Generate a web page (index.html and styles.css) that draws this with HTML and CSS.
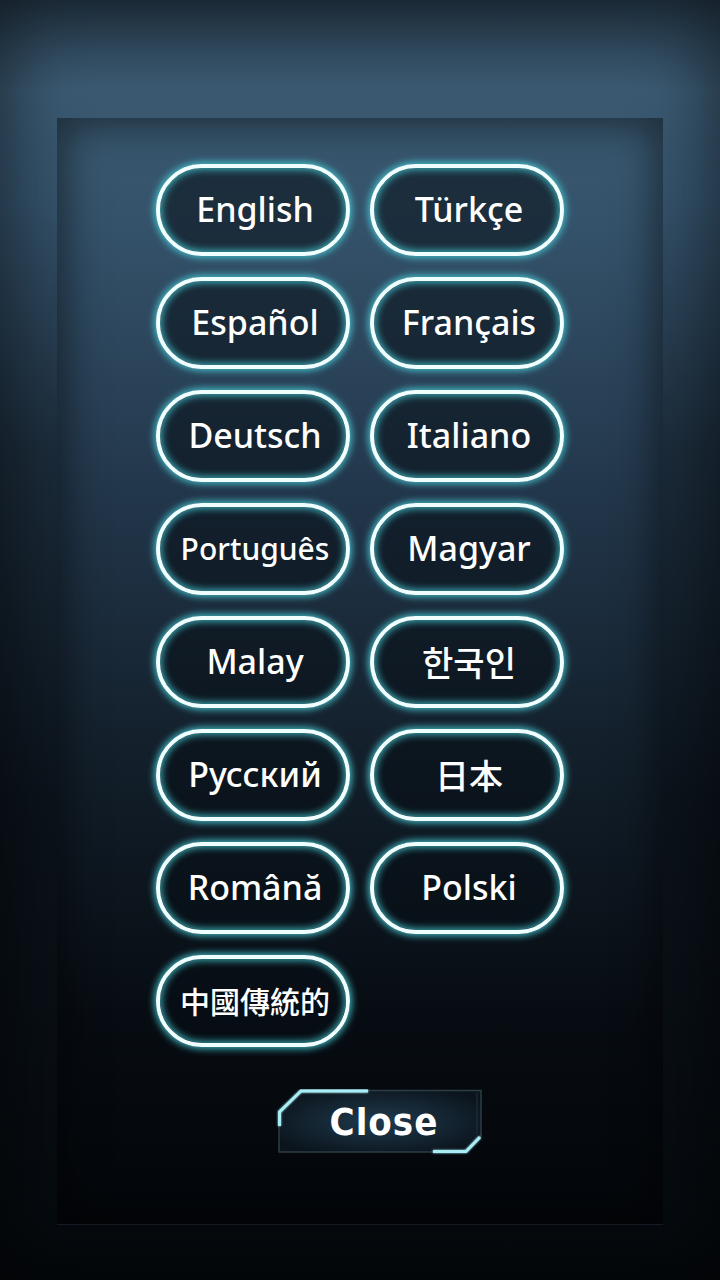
FILE: index.html
```html
<!DOCTYPE html>
<html>
<head>
    <title>Language</title>
    <link rel="stylesheet" href="styles.css">
</head>
<body>
    <div class="screen">
        <div class="panel">
            <!-- language list -->
            <div class="lang-grid">
                <button class="lang-btn">English</button>
                <button class="lang-btn">Türkçe</button>
                <button class="lang-btn">Español</button>
                <button class="lang-btn">Français</button>
                <button class="lang-btn">Deutsch</button>
                <button class="lang-btn">Italiano</button>
                <button class="lang-btn small">Português</button>
                <button class="lang-btn">Magyar</button>
                <button class="lang-btn">Malay</button>
                <button class="lang-btn cjk">한국인</button>
                <button class="lang-btn">Русский</button>
                <button class="lang-btn cjk">日本</button>
                <button class="lang-btn">Română</button>
                <button class="lang-btn">Polski</button>
                <button class="lang-btn cjk-tc">中國傳統的</button>
            </div>

            <div class="close-row">
                <button class="close-btn">
                    <svg class="close-frame" width="208" height="66" viewBox="0 0 208 66">
                        <defs>
                            <radialGradient id="closeFill" cx="50%" cy="50%" r="60%">
                                <stop offset="0" stop-color="#1f3a4e"/>
                                <stop offset="1" stop-color="#0b141c"/>
                            </radialGradient>
                            <filter id="glow" x="-20%" y="-50%" width="140%" height="200%">
                                <feGaussianBlur stdDeviation="1.2" result="b"/>
                                <feMerge><feMergeNode in="b"/><feMergeNode in="SourceGraphic"/></feMerge>
                            </filter>
                        </defs>
                        <path d="M3 23 L25 1.5 L205 1.5 L205 47 L190 63 L3 63 Z" fill="url(#closeFill)" stroke="#2c3d46" stroke-width="1.5"/>
                        <path d="M201 4 L201 45" stroke="#243139" stroke-width="1"/>
                        <path d="M3.5 37 L3.5 23 L25 2 L92 2" fill="none" stroke="#a8ecf6" stroke-width="3" filter="url(#glow)"/>
                        <path d="M157 62.5 L190 62.5 L204 48" fill="none" stroke="#a8ecf6" stroke-width="3" filter="url(#glow)"/>
                    </svg>
                    <span class="close-label">Close</span>
                </button>
            </div>
        </div>
    </div>
</body>
</html>
```

FILE: styles.css
```css
body {
    margin: 0;
    padding: 0;
    background-color: #05090d;
    font-family: "Noto Sans", "Noto Sans CJK KR", sans-serif;
}

.screen {
    width: 720px;
    height: 1280px;
    box-sizing: border-box;
    padding: 118px 57px 55px 57px;
    background: linear-gradient(#263b4c 0, #3b5a72 90px, #35536c 200px, #1c2c3b 450px, #0b131b 800px, #05090d 1280px);
    box-shadow: inset 0 0 70px 10px rgba(0, 0, 0, 0.5);
}

.panel {
    height: 1107px;
    box-sizing: border-box;
    padding-top: 46px;
    display: flex;
    flex-direction: column;
    align-items: center;
    background: linear-gradient(#3a5a72 0, #34526a 110px, #22364a 380px, #121e29 650px, #070c12 900px, #03060a 100%);
    box-shadow: inset 0 0 40px 8px rgba(0, 0, 0, 0.5);
    border-bottom: 1px solid #121b23;
}

.lang-grid {
    display: grid;
    grid-template-columns: 194px 194px;
    column-gap: 20px;
    row-gap: 21px;
}

.lang-btn {
    height: 92px;
    box-sizing: border-box;
    border: 4px solid #effeff;
    border-radius: 46px;
    background-color: rgba(8, 14, 22, 0.55);
    box-shadow: 0 0 7px 2px rgba(70, 205, 215, 0.85), inset 0 0 7px 2px rgba(70, 205, 215, 0.75);
    color: #fff;
    font-family: "Noto Sans", "Noto Sans CJK KR", sans-serif;
    font-size: 34px;
    font-weight: 500;
    padding: 0 0 2px 4px;
    cursor: pointer;
}

.lang-btn.small {
    font-size: 30px;
}

.lang-btn.cjk {
    font-family: "Noto Sans CJK KR", "Noto Sans CJK JP", sans-serif;
    font-size: 34px;
    font-weight: 500;
}

.lang-btn.cjk-tc {
    font-family: "Noto Sans CJK TC", sans-serif;
    font-size: 30px;
    font-weight: 500;
}

.close-row {
    margin-top: 42px;
    padding-left: 40px;
}

.close-btn {
    position: relative;
    width: 208px;
    height: 66px;
    border: none;
    padding: 0;
    background: none;
    cursor: pointer;
}

.close-frame {
    position: absolute;
    left: 0;
    top: 0;
}

.close-label {
    position: relative;
    display: block;
    color: #fff;
    font-family: "DejaVu Sans", sans-serif;
    font-stretch: condensed;
    font-weight: bold;
    font-size: 38px;
    letter-spacing: 1px;
    line-height: 66px;
    padding-left: 8px;
}
```
